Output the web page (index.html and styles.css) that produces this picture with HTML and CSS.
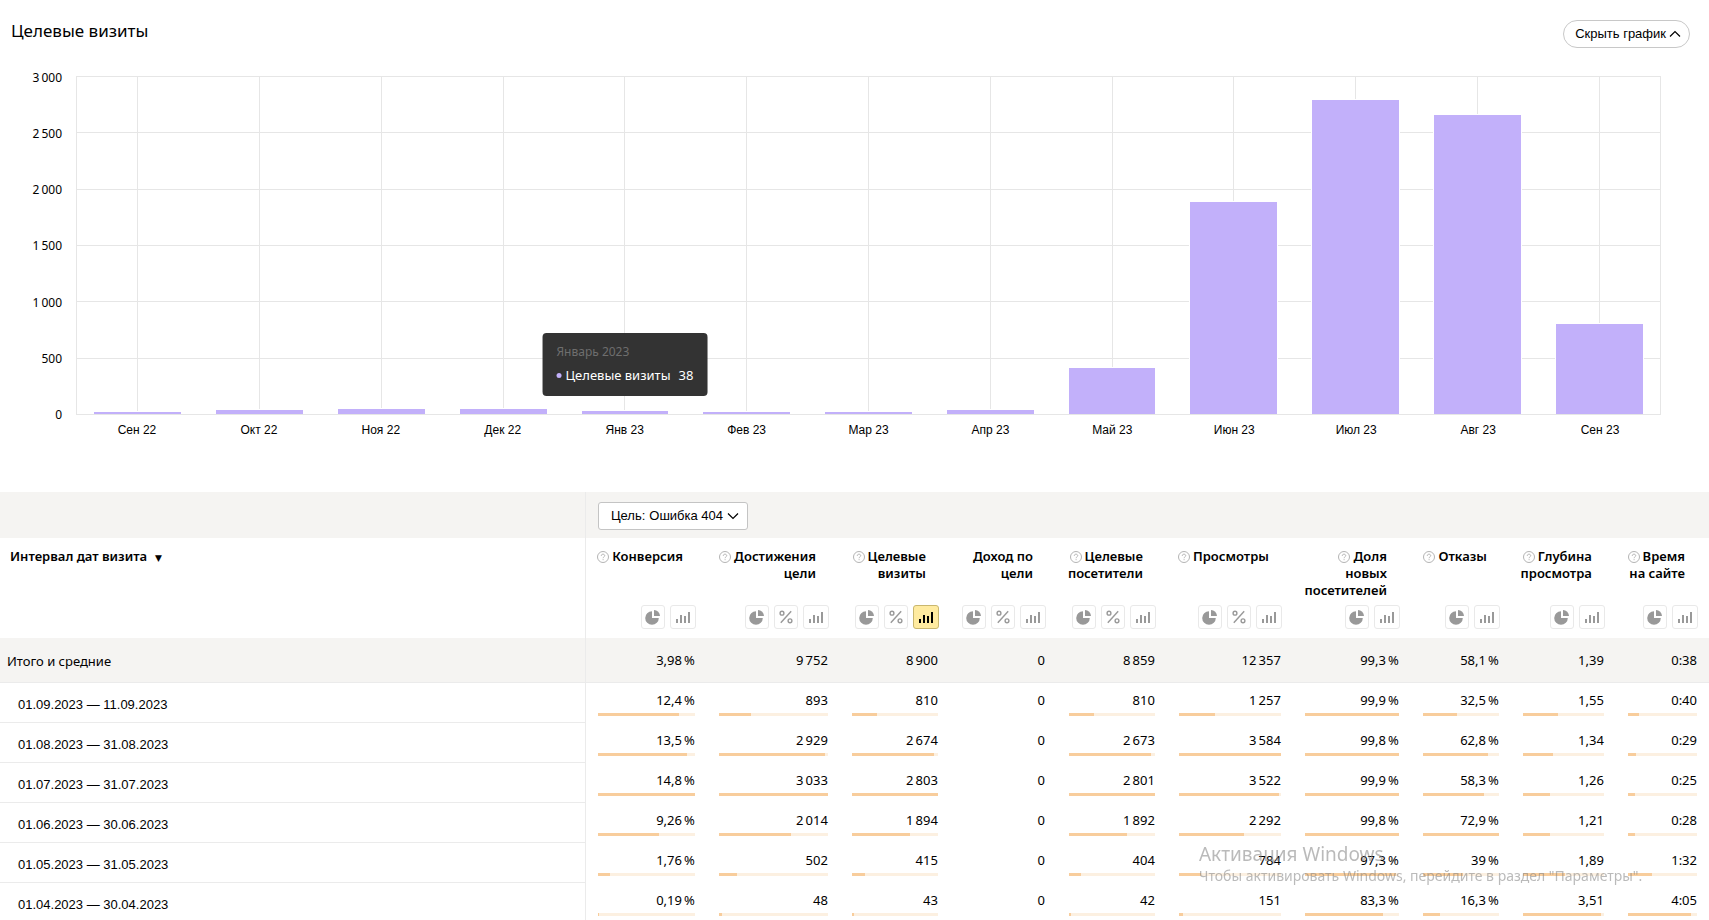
FILE: index.html
```html
<!DOCTYPE html>
<html lang="ru">
<head>
<meta charset="utf-8">
<title>Целевые визиты</title>
<link rel="stylesheet" href="styles.css">
</head>
<body>
<svg class="sprite" aria-hidden="true">
  <symbol id="pie" viewBox="0 0 16 16"><path d="M7 2.2V9h6.8A6.8 6.8 0 1 1 7 2.2z"/><path d="M9 1a6.2 6.2 0 0 1 6 6H9z"/></symbol>
  <symbol id="percent" viewBox="0 0 16 16"><g fill="none" stroke="currentColor" stroke-width="1.4"><circle cx="4" cy="4.2" r="1.9"/><circle cx="12" cy="11.8" r="1.9"/><path d="M13.2 2.2 2.8 13.8"/></g></symbol>
  <symbol id="bars" viewBox="0 0 16 16"><path d="M1 10h2v4H1zM5 6h2v8H5zM9 7h2v7H9zM13 3h2v11h-2z"/></symbol>
  <symbol id="help" viewBox="0 0 12 12"><circle cx="6" cy="6" r="5.5" fill="none" stroke="currentColor"/><path d="M4.300 4.900C4.300 3.700 5 3.200 6 3.200s1.700.6 1.700 1.500C7.700 5.800 6.100 5.900 6.100 7.200M6.100 8.200v1" fill="none" stroke="currentColor"/></symbol>
</svg>

<main>
<section class="report-chart">
  <header class="chart-head">
    <h1 class="chart-title">Целевые визиты</h1>
    <button class="toggle" type="button">Скрыть график
      <svg class="toggle-icon" viewBox="0 0 12 12" aria-hidden="true"><path d="M1 8.500 6 3.500l5 5"/></svg>
    </button>
  </header>
  <div class="chart">
    <div class="y-axis"><span>3&#8201;000</span><span>2&#8201;500</span><span>2&#8201;000</span><span>1&#8201;500</span><span>1&#8201;000</span><span>500</span><span>0</span></div>
    <div class="plot">
      <div class="grid-lines"><i></i><i></i><i></i><i></i><i></i><i></i></div>
      <div class="columns">
        <div class="column"><div class="bar" style="height:0.9%"></div></div>
        <div class="column"><div class="bar" style="height:1.4%"></div></div>
        <div class="column"><div class="bar" style="height:1.7%"></div></div>
        <div class="column"><div class="bar" style="height:1.7%"></div></div>
        <div class="column"><div class="bar" style="height:1.2%"></div>
          <div class="tooltip">
            <div class="tooltip-date">Январь 2023</div>
            <div class="tooltip-row"><i class="dot"></i><span>Целевые визиты</span><span class="tooltip-value">38</span></div>
          </div>
        </div>
        <div class="column"><div class="bar" style="height:0.9%"></div></div>
        <div class="column"><div class="bar" style="height:0.9%"></div></div>
        <div class="column"><div class="bar" style="height:1.4%"></div></div>
        <div class="column"><div class="bar" style="height:13.8%"></div></div>
        <div class="column"><div class="bar" style="height:63.1%"></div></div>
        <div class="column"><div class="bar" style="height:93.2%"></div></div>
        <div class="column"><div class="bar" style="height:88.9%"></div></div>
        <div class="column"><div class="bar" style="height:27%"></div></div>
      </div>
    </div>
    <div class="x-axis"><span>Сен 22</span><span>Окт 22</span><span>Ноя 22</span><span>Дек 22</span><span>Янв 23</span><span>Фев 23</span><span>Мар 23</span><span>Апр 23</span><span>Май 23</span><span>Июн 23</span><span>Июл 23</span><span>Авг 23</span><span>Сен 23</span></div>
  </div>
</section>

<table class="report">
  <colgroup><col><col class="w1"><col class="w2"><col class="w3"><col class="w4"><col class="w5"><col class="w6"><col class="w7"><col class="w8"><col class="w9"><col class="w10"></colgroup>
  <thead>
    <tr class="band">
      <td class="dim"></td>
      <td colspan="10"><div class="goal"><label for="goal">Цель:</label><select id="goal"><option>Ошибка 404</option></select><svg class="goal-icon" viewBox="0 0 12 12" aria-hidden="true"><path d="M1 3.500l5 5 5-5"/></svg></div></td>
    </tr>
    <tr class="heads">
      <th class="dim" scope="col"><span>Интервал дат визита</span><span class="sort">▼</span></th>
      <th scope="col"><div class="name"><svg class="help"><use href="#help"/></svg>Конверсия</div><div class="tools"><button type="button" aria-label="Доли"><svg><use href="#pie"/></svg></button><button type="button" class="wide" aria-label="Значения"><svg><use href="#bars"/></svg></button></div></th>
      <th scope="col"><div class="name"><svg class="help"><use href="#help"/></svg>Достижения<br>цели</div><div class="tools"><button type="button" aria-label="Доли"><svg><use href="#pie"/></svg></button><button type="button" aria-label="Проценты"><svg><use href="#percent"/></svg></button><button type="button" class="wide" aria-label="Значения"><svg><use href="#bars"/></svg></button></div></th>
      <th scope="col"><div class="name"><svg class="help"><use href="#help"/></svg>Целевые<br>визиты</div><div class="tools"><button type="button" aria-label="Доли"><svg><use href="#pie"/></svg></button><button type="button" aria-label="Проценты"><svg><use href="#percent"/></svg></button><button type="button" class="wide active" aria-label="Значения"><svg><use href="#bars"/></svg></button></div></th>
      <th scope="col"><div class="name">Доход по<br>цели</div><div class="tools"><button type="button" aria-label="Доли"><svg><use href="#pie"/></svg></button><button type="button" aria-label="Проценты"><svg><use href="#percent"/></svg></button><button type="button" class="wide" aria-label="Значения"><svg><use href="#bars"/></svg></button></div></th>
      <th scope="col"><div class="name"><svg class="help"><use href="#help"/></svg>Целевые<br>посетители</div><div class="tools"><button type="button" aria-label="Доли"><svg><use href="#pie"/></svg></button><button type="button" aria-label="Проценты"><svg><use href="#percent"/></svg></button><button type="button" class="wide" aria-label="Значения"><svg><use href="#bars"/></svg></button></div></th>
      <th scope="col"><div class="name"><svg class="help"><use href="#help"/></svg>Просмотры</div><div class="tools"><button type="button" aria-label="Доли"><svg><use href="#pie"/></svg></button><button type="button" aria-label="Проценты"><svg><use href="#percent"/></svg></button><button type="button" class="wide" aria-label="Значения"><svg><use href="#bars"/></svg></button></div></th>
      <th scope="col"><div class="name"><svg class="help"><use href="#help"/></svg>Доля<br>новых<br>посетителей</div><div class="tools"><button type="button" aria-label="Доли"><svg><use href="#pie"/></svg></button><button type="button" class="wide" aria-label="Значения"><svg><use href="#bars"/></svg></button></div></th>
      <th scope="col"><div class="name"><svg class="help"><use href="#help"/></svg>Отказы</div><div class="tools"><button type="button" aria-label="Доли"><svg><use href="#pie"/></svg></button><button type="button" class="wide" aria-label="Значения"><svg><use href="#bars"/></svg></button></div></th>
      <th scope="col"><div class="name"><svg class="help"><use href="#help"/></svg>Глубина<br>просмотра</div><div class="tools"><button type="button" aria-label="Доли"><svg><use href="#pie"/></svg></button><button type="button" class="wide" aria-label="Значения"><svg><use href="#bars"/></svg></button></div></th>
      <th scope="col"><div class="name"><svg class="help"><use href="#help"/></svg>Время<br>на сайте</div><div class="tools"><button type="button" aria-label="Доли"><svg><use href="#pie"/></svg></button><button type="button" class="wide" aria-label="Значения"><svg><use href="#bars"/></svg></button></div></th>
    </tr>
    <tr class="total">
      <th class="dim" scope="row">Итого и средние</th><td>3,98&#8201;%</td><td>9&#8201;752</td><td>8&#8201;900</td><td>0</td><td>8&#8201;859</td><td>12&#8201;357</td><td>99,3&#8201;%</td><td>58,1&#8201;%</td><td>1,39</td><td>0:38</td>
    </tr>
  </thead>
  <tbody>
    <tr><th class="dim" scope="row">01.09.2023 — 11.09.2023</th>
      <td>12,4&#8201;%<div class="track"><i style="width:84%"></i></div></td><td>893<div class="track"><i style="width:29%"></i></div></td><td>810<div class="track"><i style="width:29%"></i></div></td><td>0</td><td>810<div class="track"><i style="width:29%"></i></div></td><td>1&#8201;257<div class="track"><i style="width:35%"></i></div></td><td>99,9&#8201;%<div class="track"><i style="width:100%"></i></div></td><td>32,5&#8201;%<div class="track"><i style="width:45%"></i></div></td><td>1,55<div class="track"><i style="width:43%"></i></div></td><td>0:40<div class="track"><i style="width:16%"></i></div></td></tr>
    <tr><th class="dim" scope="row">01.08.2023 — 31.08.2023</th>
      <td>13,5&#8201;%<div class="track"><i style="width:92%"></i></div></td><td>2&#8201;929<div class="track"><i style="width:97%"></i></div></td><td>2&#8201;674<div class="track"><i style="width:95%"></i></div></td><td>0</td><td>2&#8201;673<div class="track"><i style="width:95%"></i></div></td><td>3&#8201;584<div class="track"><i style="width:100%"></i></div></td><td>99,8&#8201;%<div class="track"><i style="width:100%"></i></div></td><td>62,8&#8201;%<div class="track"><i style="width:86%"></i></div></td><td>1,34<div class="track"><i style="width:37%"></i></div></td><td>0:29<div class="track"><i style="width:11%"></i></div></td></tr>
    <tr><th class="dim" scope="row">01.07.2023 — 31.07.2023</th>
      <td>14,8&#8201;%<div class="track"><i style="width:100%"></i></div></td><td>3&#8201;033<div class="track"><i style="width:100%"></i></div></td><td>2&#8201;803<div class="track"><i style="width:100%"></i></div></td><td>0</td><td>2&#8201;801<div class="track"><i style="width:100%"></i></div></td><td>3&#8201;522<div class="track"><i style="width:98%"></i></div></td><td>99,9&#8201;%<div class="track"><i style="width:100%"></i></div></td><td>58,3&#8201;%<div class="track"><i style="width:80%"></i></div></td><td>1,26<div class="track"><i style="width:34%"></i></div></td><td>0:25<div class="track"><i style="width:10%"></i></div></td></tr>
    <tr><th class="dim" scope="row">01.06.2023 — 30.06.2023</th>
      <td>9,26&#8201;%<div class="track"><i style="width:63%"></i></div></td><td>2&#8201;014<div class="track"><i style="width:66%"></i></div></td><td>1&#8201;894<div class="track"><i style="width:68%"></i></div></td><td>0</td><td>1&#8201;892<div class="track"><i style="width:68%"></i></div></td><td>2&#8201;292<div class="track"><i style="width:64%"></i></div></td><td>99,8&#8201;%<div class="track"><i style="width:100%"></i></div></td><td>72,9&#8201;%<div class="track"><i style="width:100%"></i></div></td><td>1,21<div class="track"><i style="width:34%"></i></div></td><td>0:28<div class="track"><i style="width:10%"></i></div></td></tr>
    <tr><th class="dim" scope="row">01.05.2023 — 31.05.2023</th>
      <td>1,76&#8201;%<div class="track"><i style="width:12%"></i></div></td><td>502<div class="track"><i style="width:17%"></i></div></td><td>415<div class="track"><i style="width:15%"></i></div></td><td>0</td><td>404<div class="track"><i style="width:14%"></i></div></td><td>784<div class="track"><i style="width:22%"></i></div></td><td>97,3&#8201;%<div class="track"><i style="width:97%"></i></div></td><td>39&#8201;%<div class="track"><i style="width:53%"></i></div></td><td>1,89<div class="track"><i style="width:52%"></i></div></td><td>1:32<div class="track"><i style="width:35%"></i></div></td></tr>
    <tr><th class="dim" scope="row">01.04.2023 — 30.04.2023</th>
      <td>0,19&#8201;%<div class="track"><i style="width:1%"></i></div></td><td>48<div class="track"><i style="width:3%"></i></div></td><td>43<div class="track"><i style="width:2%"></i></div></td><td>0</td><td>42<div class="track"><i style="width:2%"></i></div></td><td>151<div class="track"><i style="width:4%"></i></div></td><td>83,3&#8201;%<div class="track"><i style="width:83%"></i></div></td><td>16,3&#8201;%<div class="track"><i style="width:22%"></i></div></td><td>3,51<div class="track"><i style="width:96%"></i></div></td><td>4:05<div class="track"><i style="width:92%"></i></div></td></tr>
  </tbody>
</table>
</main>

<aside class="activation">
  <p class="activation-title">Активация Windows</p>
  <p class="activation-text">Чтобы активировать Windows, перейдите в раздел "Параметры".</p>
</aside>
</body>
</html>
```
FILE: styles.css
```css
* { box-sizing: border-box; }
html { scrollbar-width: none; }
body {
  margin: 0;
  background: #fff;
  color: #000;
  font: 13px/18px "Noto Sans", sans-serif;
}
button, select { font: 13px/18px "Liberation Sans", sans-serif; color: #000; margin: 0; }
.sprite { display: none; }

/* Chart */
.chart-head {
  display: flex;
  justify-content: space-between;
  align-items: flex-start;
  height: 76px;
  padding: 20px 19px 0 11px;
}
.chart-title { margin: 0; font-size: 17px; line-height: 22px; font-weight: 400; }
.toggle {
  display: flex;
  align-items: center;
  gap: 3px;
  height: 28px;
  padding: 0 8px 0 11px;
  border: 1px solid #c8c8c8;
  border-radius: 14px;
  background: #fff;
}
.toggle-icon, .goal-icon { width: 12px; height: 12px; fill: none; stroke: #000; stroke-width: 1.2; }

.chart {
  display: grid;
  grid-template: 339px 16px / 76px 1fr;
  row-gap: 7px;
  padding-right: 48px;
}
.y-axis {
  display: flex;
  flex-direction: column;
  justify-content: space-between;
  margin: -6px 14px -8px 0;
  text-align: right;
  font-size: 12px;
  line-height: 16px;
}
.plot { display: grid; border: 1px solid #e6e6e6; border-top: 0; }
.grid-lines, .columns { grid-area: 1 / 1; display: flex; }
.grid-lines { flex-direction: column; }
.grid-lines i { flex: 1; border-top: 1px solid #e6e6e6; }
.column {
  position: relative;
  flex: 1;
  display: flex;
  align-items: flex-end;
  justify-content: center;
  background: linear-gradient(#e6e6e6, #e6e6e6) center / 1px 100% no-repeat;
}
.bar {
  width: 73%;
  min-height: 3px;
  border: 1px solid #fff;
  border-bottom: 0;
  background: #c2b0fa;
}
.x-axis { grid-column: 2; display: flex; font: 12px/16px "Liberation Sans", sans-serif; text-align: center; }
.x-axis span { flex: 1; }

.tooltip {
  position: absolute;
  bottom: 18px;
  left: 50%;
  transform: translateX(-50%);
  z-index: 1;
  padding: 10px 14px 12px;
  border-radius: 4px;
  background: #333;
  color: #fff;
  white-space: nowrap;
}
.tooltip-date { margin-bottom: 5px; color: #6e6e6e; font-size: 12px; }
.tooltip-row { display: flex; align-items: center; }
.dot { width: 5px; height: 5px; margin-right: 4px; border-radius: 50%; background: #c2b0fa; }
.tooltip-value { margin-left: 8px; }

/* Table */
.report { width: 100%; margin-top: 54px; table-layout: fixed; border-spacing: 0; }
.w1 { width: 121px; }
.w2 { width: 133px; }
.w3 { width: 110px; }
.w4 { width: 107px; }
.w5 { width: 110px; }
.w6 { width: 126px; }
.w7 { width: 118px; }
.w8 { width: 100px; }
.w9 { width: 105px; }
.w10 { width: 93px; }
.report th, .report td { vertical-align: top; text-align: right; white-space: nowrap; }
.report td { padding: 8px 12px 7px; }
.report .dim { text-align: left; border-right: 1px solid #ebebeb; }

.report .band td { padding: 10px 12px 8px; background: #f5f4f2; }
.goal {
  position: relative;
  display: flex;
  align-items: center;
  width: 150px;
  height: 28px;
  padding-left: 12px;
  border: 1px solid #c4c4c4;
  border-radius: 3px;
  background: #fff;
  font: 13px/18px "Liberation Sans", sans-serif;
}
.goal select { flex: 1; height: 26px; padding: 0 0 0 4px; border: 0; background: none; appearance: none; }
.goal-icon { position: absolute; right: 8px; pointer-events: none; }

.report .heads th { padding: 10px 11px 9px 0; line-height: 17px; font-weight: 600; }
.report .heads .dim { padding-left: 10px; }
.sort { margin-left: 8px; font: 9px/17px "DejaVu Sans", sans-serif; }
.name { height: 51px; padding-right: 13px; }
.help { width: 12px; height: 12px; margin-right: 3px; vertical-align: -2px; color: #b4b4b4; }
.tools { display: flex; justify-content: flex-end; gap: 5px; margin-top: 6px; }
.tools button {
  display: flex;
  align-items: center;
  justify-content: center;
  width: 24px;
  height: 24px;
  padding: 0;
  border: 1px solid #e9e9e9;
  border-radius: 3px;
  background: #fff;
  color: #999;
}
.tools .wide { width: 26px; }
.tools svg { width: 16px; height: 16px; fill: currentColor; }
.tools .active { border-color: #c9b76f; background: #ffeba0; color: #000; }

.report .total th, .report .total td {
  padding-top: 13px;
  padding-bottom: 13px;
  border-bottom: 1px solid #ebebeb;
  background: #f5f4f2;
  font-weight: 400;
}
.report .total th { padding-left: 7px; padding-top: 14px; padding-bottom: 12px; }
.report tbody th {
  padding: 13px 0 8px 18px;
  border-bottom: 1px solid #ebebeb;
  font: 13px/18px "Liberation Sans", sans-serif;
}
.track { height: 3px; margin-top: 4px; background: #fcf0e1; }
.track i { display: block; height: 3px; background: #f8cd9c; }

/* System notice over the page */
.activation {
  position: fixed;
  right: 54px;
  bottom: 34px;
  width: 456px;
  color: rgba(130, 130, 130, .55);
  pointer-events: none;
}
.activation p { margin: 0; white-space: nowrap; }
.activation-title { font-size: 19px; line-height: 24px; }
.activation-text { font-size: 14px; line-height: 20px; }
```
